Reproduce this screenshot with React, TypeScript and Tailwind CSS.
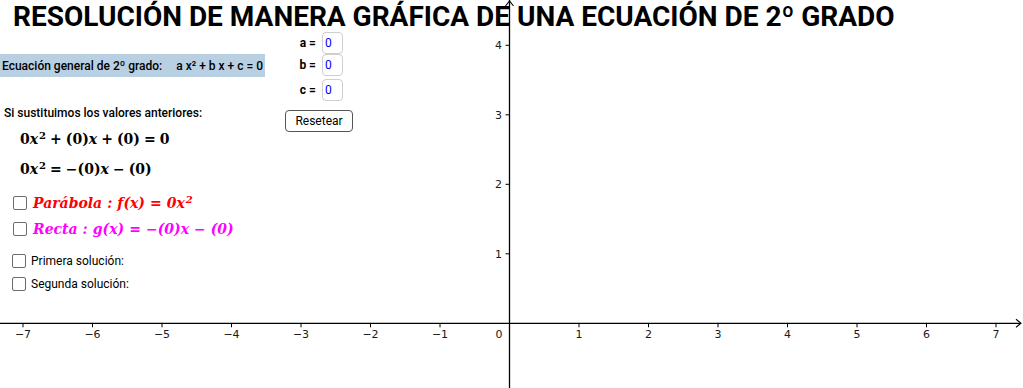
import React from "react";

const OX = 509.5;
const OY = 323.3;
const U = 69.5;
const AX_FONT = "'DejaVu Sans', sans-serif";

function Axes() {
  const xs = [-7, -6, -5, -4, -3, -2, -1, 1, 2, 3, 4, 5, 6, 7];
  const ys = [1, 2, 3, 4];
  return (
    <svg className="absolute inset-0" width={1023} height={388} viewBox="0 0 1023 388">
      <line x1={0} y1={OY} x2={1021} y2={OY} stroke="#000" strokeWidth={1.3} />
      <polyline points={`1016,${OY - 4} 1021,${OY} 1016,${OY + 4}`} fill="none" stroke="#000" strokeWidth={1.1} />
      <line x1={OX} y1={0} x2={OX} y2={388} stroke="#000" strokeWidth={1.3} />
      <polyline points={`${OX - 4},6 ${OX},1 ${OX + 4},6`} fill="none" stroke="#000" strokeWidth={1.1} />
      {xs.map((v) => {
        const x = OX + v * U;
        return (
          <g key={`x${v}`}>
            <line x1={x} y1={OY} x2={x} y2={OY + 4} stroke="#000" strokeWidth={1} />
            <text x={x} y={337.5} textAnchor="middle" fontSize={11} fill="#1a1a1a" fontFamily={AX_FONT}>
              {v < 0 ? `\u2212${-v}` : `${v}`}
            </text>
          </g>
        );
      })}
      <text x={499} y={337.5} textAnchor="middle" fontSize={11} fill="#1a1a1a" fontFamily={AX_FONT}>
        0
      </text>
      {ys.map((v) => {
        const y = OY - v * U;
        return (
          <g key={`y${v}`}>
            <line x1={OX - 4} y1={y} x2={OX} y2={y} stroke="#000" strokeWidth={1} />
            <text x={502} y={y + 4} textAnchor="end" fontSize={11} fill="#1a1a1a" fontFamily={AX_FONT}>
              {v}
            </text>
          </g>
        );
      })}
    </svg>
  );
}

function Box() {
  return <span className="inline-block w-[14px] h-[14px] border border-[#6b6b6b] rounded-[2px] bg-white shrink-0" />;
}

function Field({ label }: { label: string }) {
  return (
    <div className="flex items-center gap-[6px]">
      <span className="w-[22px] text-right text-[12px] font-bold text-black">{label} =</span>
      <span className="w-[21px] h-[22px] border border-[#cfcfcf] rounded-[4px] bg-white text-[12px] text-[#0000ff] leading-[20px] pl-[2px]">
        0
      </span>
    </div>
  );
}

function Op({ children }: { children: React.ReactNode }) {
  return <span className="px-[4px]">{children}</span>;
}

function OpW({ children }: { children: React.ReactNode }) {
  return <span className="px-[5px]">{children}</span>;
}

function Sq() {
  return <sup className="text-[10px] ml-[1px]">2</sup>;
}

const serif = { fontFamily: "'DejaVu Serif', 'Liberation Serif', serif" };

export default function App() {
  return (
    <div
      className="relative w-[1023px] h-[388px] bg-white overflow-hidden flex flex-col"
      style={{ fontFamily: "Roboto, 'Liberation Sans', sans-serif" }}
    >
      <Axes />
      <h1 className="relative pl-[13px] pt-[1px] text-[28px] font-bold text-black leading-[32px] whitespace-nowrap">
        RESOLUCIÓN DE MANERA GRÁFICA DE UNA ECUACIÓN DE 2º GRADO
      </h1>

      <div className="relative flex">
        {/* left column */}
        <div className="flex flex-col w-[265px]">
          <div className="mt-[21px] h-[23px] bg-[#b9cfe2] flex items-center pl-[2px] text-[12px] font-medium text-black whitespace-nowrap">
            Ecuación general de 2º grado:<span className="ml-[14px]">a x² + b x + c = 0</span>
          </div>

          <div className="mt-[28px] pl-[4px] text-[12px] leading-[16px] font-medium text-black whitespace-nowrap">
            Si sustituimos los valores anteriores:
          </div>

          <div className="mt-[8px] pl-[20px] text-[14px] leading-[20px] font-bold text-black whitespace-nowrap" style={serif}>
            0<i>x</i>
            <Sq />
            <Op>+</Op>(0)<i>x</i>
            <Op>+</Op>(0)<Op>=</Op>0
          </div>
          <div className="mt-[10px] pl-[20px] text-[14px] leading-[20px] font-bold text-black whitespace-nowrap" style={serif}>
            0<i>x</i>
            <Sq />
            <Op>=</Op>−(0)<i>x</i>
            <Op>−</Op>(0)
          </div>

          <div className="mt-[14px] pl-[13px] flex flex-col gap-[6px]">
            <div className="flex items-center gap-[6px] whitespace-nowrap">
              <Box />
              <span className="text-[14px] leading-[20px] font-bold italic text-[#ff0000]" style={serif}>
                Parábola<OpW>:</OpW>f(x)<OpW>=</OpW>0x<Sq />
              </span>
            </div>
            <div className="flex items-center gap-[6px] whitespace-nowrap">
              <Box />
              <span className="text-[14px] leading-[20px] font-bold italic text-[#ff00ff]" style={serif}>
                Recta<OpW>:</OpW>g(x)<OpW>=</OpW>−(0)x<OpW>−</OpW>(0)
              </span>
            </div>
          </div>

          <div className="mt-[14px] pl-[12px] flex flex-col gap-[7px] text-[12px] leading-[16px] text-black">
            <div className="flex items-center gap-[5px] whitespace-nowrap">
              <Box />
              <span>Primera solución:</span>
            </div>
            <div className="flex items-center gap-[5px] whitespace-nowrap">
              <Box />
              <span>Segunda solución:</span>
            </div>
          </div>
        </div>

        {/* right column: inputs */}
        <div className="ml-[29px] -mt-[1px] flex flex-col">
          <Field label="a" />
          <Field label="b" />
          <div className="mt-[3px]">
            <Field label="c" />
          </div>
          <button className="mt-[9px] -ml-[9px] w-[68px] h-[22px] border border-[#555] rounded-[4px] flex items-center justify-center text-[12px] text-black bg-white">
            Resetear
          </button>
        </div>
      </div>
    </div>
  );
}
